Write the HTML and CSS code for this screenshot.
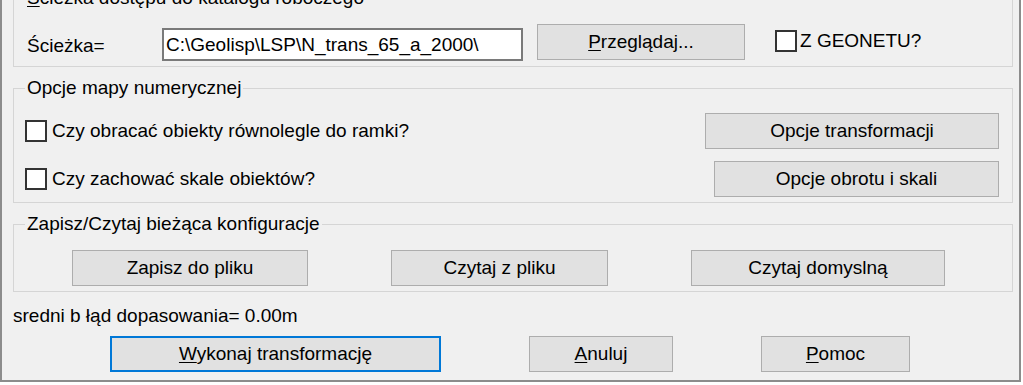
FILE: index.html
```html
<!DOCTYPE html>
<html lang="pl">
<head>
    <meta charset="UTF-8">
    <meta name="viewport" content="width=device-width, initial-scale=1.0">
    <title>Transformacja</title>
    <link rel="stylesheet" href="styles.css">
</head>
<body>
    <div class="dialog">
        <fieldset class="group group-path">
            <legend><u>Ś</u>cieżka dostępu do katalogu roboczego</legend>
            <div class="path-row">
                <label class="path-label" for="path">Ścieżka=</label>
                <input type="text" id="path" class="path-input" value="C:\Geolisp\LSP\N_trans_65_a_2000\">
                <button class="btn btn-browse"><u>P</u>rzeglądaj...</button>
                <label class="check check-geonet"><input type="checkbox" class="box">Z GEONETU?</label>
            </div>
        </fieldset>

        <fieldset class="group group-map">
            <legend>Opcje mapy numerycznej</legend>
            <div class="opt-row">
                <label class="check"><input type="checkbox" class="box">Czy obracać obiekty równolegle do ramki?</label>
                <button class="btn btn-transf">Opcje transformacji</button>
            </div>
            <div class="opt-row">
                <label class="check"><input type="checkbox" class="box">Czy zachować skale obiektów?</label>
                <button class="btn btn-rot">Opcje obrotu i skali</button>
            </div>
        </fieldset>

        <fieldset class="group group-config">
            <legend>Zapisz/Czytaj bieżąca konfiguracje</legend>
            <div class="config-row">
                <button class="btn btn-save">Zapisz do pliku</button>
                <button class="btn btn-read">Czytaj z pliku</button>
                <button class="btn btn-default">Czytaj domyslną</button>
            </div>
        </fieldset>

        <div class="result">sredni b łąd dopasowania= 0.00m</div>

        <div class="actions">
            <button class="btn btn-run"><u>W</u>ykonaj transformację</button>
            <button class="btn btn-cancel"><u>A</u>nuluj</button>
            <button class="btn btn-help"><u>P</u>omoc</button>
        </div>
    </div>
</body>
</html>
```

FILE: styles.css
```css
* {
    box-sizing: border-box;
}
body {
    margin: 0;
    background: #fff;
    font-family: "Liberation Sans", Arial, sans-serif;
    font-size: 19px;
    color: #000;
    overflow: hidden;
}
.dialog {
    width: 1021px;
    height: 382px;
    background: #f0f0f0;
    border-left: 2px solid #8c8c8c;
    border-right: 2px solid #8c8c8c;
    border-bottom: 2px solid #8c8c8c;
    padding: 0 7px 0 11px;
    overflow: hidden;
}
.group {
    margin: 11px 0 0 0;
    padding: 0 13px 5px 11px;
    border: 1px solid #d5d5d5;
    min-width: 0;
    width: 1000px;
}
.group legend {
    padding: 0 2px;
    line-height: 20px;
    height: 20px;
}
.group-path {
    margin-top: -12px;
    padding-top: 16px;
}
.group-map {
    padding-top: 15px;
}
.group-config {
    padding-top: 16px;
}
u {
    text-decoration: underline;
    text-underline-offset: 2px;
}

/* path row */
.path-row {
    display: flex;
    align-items: flex-start;
}
.path-label {
    width: 135px;
    margin: 12px 0 0 2px;
    line-height: 20px;
}
.path-input {
    width: 361px;
    height: 33px;
    margin-top: 4px;
    border: 2px solid #7a7a7a;
    background: #fff;
    padding: 0 2px;
    font-family: inherit;
    font-size: 19px;
    color: #000;
    outline: none;
}

/* buttons */
.btn {
    height: 36px;
    background: #e1e1e1;
    border: 1px solid #adadad;
    font-family: inherit;
    font-size: 19px;
    color: #000;
    padding: 0;
    text-align: center;
    cursor: pointer;
}
.btn-browse {
    width: 208px;
    margin-left: 14px;
}

/* checkboxes */
.check {
    display: flex;
    align-items: center;
    line-height: 20px;
}
.box {
    appearance: none;
    -webkit-appearance: none;
    width: 22px;
    height: 22px;
    margin: 0 5px 0 0;
    border: 2px solid #333;
    background: #fff;
}
.check-geonet {
    margin: 6px 0 0 30px;
}
.check-geonet .box {
    margin-right: 3px;
}

/* numeric map options */
.opt-row {
    display: flex;
    align-items: center;
}
.opt-row + .opt-row {
    margin-top: 12px;
}
.opt-row .btn {
    margin-left: auto;
}
.btn-transf {
    width: 294px;
}
.btn-rot {
    width: 285px;
}

/* config */
.config-row {
    display: flex;
    gap: 83px;
    padding-left: 47px;
}
.btn-save {
    width: 236px;
}
.btn-read {
    width: 217px;
}
.btn-default {
    width: 254px;
}

/* bottom */
.result {
    margin-top: 14px;
    line-height: 20px;
}
.actions {
    display: flex;
    gap: 88px;
    margin-top: 10px;
    padding-left: 97px;
}
.btn-run {
    width: 331px;
    border: 2px solid #0078d7;
}
.btn-cancel {
    width: 144px;
}
.btn-help {
    width: 149px;
}
```
